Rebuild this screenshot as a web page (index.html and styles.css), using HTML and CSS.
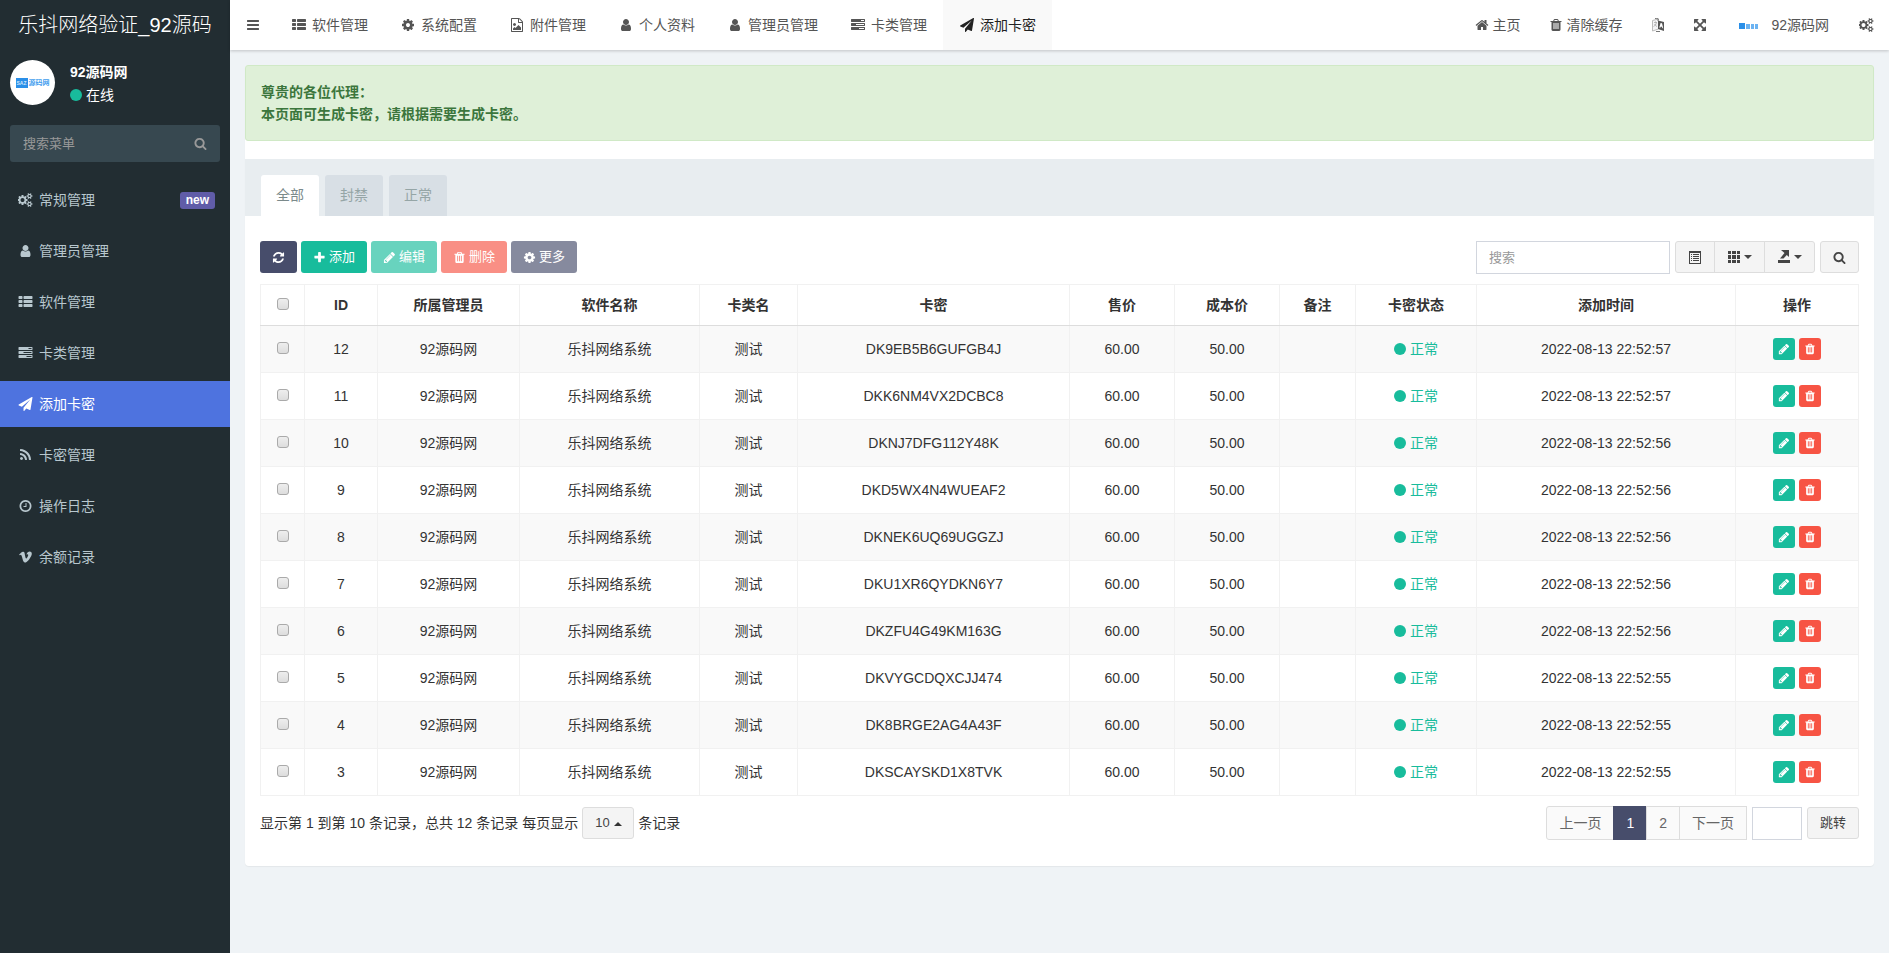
FILE: index.html
```html
<!DOCTYPE html>
<html lang="zh-CN">
<head>
    <meta charset="UTF-8">
    <meta name="viewport" content="width=device-width, initial-scale=1.0">
    <title>添加卡密</title>
    <link rel="stylesheet" href="styles.css">
</head>
<body>

    <!-- icons -->
    <svg class="sprite" aria-hidden="true">
        <symbol id="i-bars" viewBox="0 0 1792 1792"><path d="M1664 1344v128q0 26-19 45t-45 19h-1408q-26 0-45-19t-19-45v-128q0-26 19-45t45-19h1408q26 0 45 19t19 45zm0-512v128q0 26-19 45t-45 19h-1408q-26 0-45-19t-19-45v-128q0-26 19-45t45-19h1408q26 0 45 19t19 45zm0-512v128q0 26-19 45t-45 19h-1408q-26 0-45-19t-19-45v-128q0-26 19-45t45-19h1408q26 0 45 19t19 45z"/></symbol>
        <symbol id="i-list" viewBox="0 0 1792 1792"><path d="M512 1248v192q0 40-28 68t-68 28h-320q-40 0-68-28t-28-68v-192q0-40 28-68t68-28h320q40 0 68 28t28 68zm0-512v192q0 40-28 68t-68 28h-320q-40 0-68-28t-28-68v-192q0-40 28-68t68-28h320q40 0 68 28t28 68zm1280 512v192q0 40-28 68t-68 28h-960q-40 0-68-28t-28-68v-192q0-40 28-68t68-28h960q40 0 68 28t28 68zm-1280-1024v192q0 40-28 68t-68 28h-320q-40 0-68-28t-28-68v-192q0-40 28-68t68-28h320q40 0 68 28t28 68zm1280 512v192q0 40-28 68t-68 28h-960q-40 0-68-28t-28-68v-192q0-40 28-68t68-28h960q40 0 68 28t28 68zm0-512v192q0 40-28 68t-68 28h-960q-40 0-68-28t-28-68v-192q0-40 28-68t68-28h960q40 0 68 28t28 68z"/></symbol>
        <symbol id="i-cog" viewBox="0 0 1792 1792"><path d="M1152 896q0-106-75-181t-181-75-181 75-75 181 75 181 181 75 181-75 75-181zm512-109v222q0 12-8 23t-20 13l-185 28q-19 54-39 91 35 50 107 138 10 12 10 25t-9 23q-27 37-99 108t-94 71q-12 0-26-9l-138-108q-44 23-91 38-16 136-29 186-7 28-36 28h-222q-14 0-24.5-8.5t-11.5-21.5l-28-184q-49-16-90-37l-141 107q-10 9-25 9-14 0-25-11-126-114-165-168-7-10-7-23 0-12 8-23 15-21 51-66.5t54-70.5q-27-50-41-99l-183-27q-13-2-21-12.5t-8-23.5v-222q0-12 8-23t19-13l186-28q14-46 39-92-40-57-107-138-10-12-10-24 0-10 9-23 26-36 98.5-107.5t94.5-71.5q13 0 26 10l138 107q44-23 91-38 16-136 29-186 7-28 36-28h222q14 0 24.5 8.5t11.5 21.5l28 184q49 16 90 37l142-107q9-9 24-9 13 0 25 10 129 119 165 170 7 8 7 22 0 12-8 23-15 21-51 66.5t-54 70.5q26 50 41 98l183 28q13 2 21 12.5t8 23.5z"/></symbol>
        <symbol id="i-cogs" viewBox="0 0 1920 1792"><path d="M832 896q0-106-75-181t-181-75-181 75-75 181 75 181 181 75 181-75 75-181zm768 512q0-52-38-90t-90-38-90 38-38 90q0 53 37.5 90.5t90.5 37.5 90.5-37.5 37.5-90.5zm0-1024q0-52-38-90t-90-38-90 38-38 90q0 53 37.5 90.5t90.5 37.5 90.5-37.5 37.5-90.5zm-384 421v185q0 10-7 19.5t-16 10.5l-155 24q-11 35-32 76 34 48 90 115 7 11 7 20 0 12-7 19-23 30-82.5 89.5t-78.5 59.5q-11 0-21-7l-115-90q-37 19-77 31-11 108-23 155-7 24-30 24h-186q-11 0-20-7.5t-10-17.5l-23-153q-34-10-75-31l-118 89q-7 7-20 7-11 0-21-8-144-133-144-160 0-9 7-19 10-14 41-53t47-61q-23-44-35-82l-152-24q-10-1-17-9.5t-7-19.5v-185q0-10 7-19.5t16-10.5l155-24q11-35 32-76-34-48-90-115-7-11-7-20 0-12 7-20 22-30 82-89t79-59q11 0 21 7l115 90q34-18 77-32 11-108 23-154 7-24 30-24h186q11 0 20 7.5t10 17.5l23 153q34 10 75 31l118-89q8-7 20-7 11 0 21 8 144 133 144 160 0 9-7 19-12 16-42 54t-45 60q23 48 34 82l152 23q10 2 17 10.5t7 19.5zm640 533v140q0 16-149 31-12 27-30 52 51 113 51 138 0 4-4 7-122 71-124 71-8 0-46-47t-52-68q-20 2-30 2t-30-2q-14 21-52 68t-46 47q-2 0-124-71-4-3-4-7 0-25 51-138-18-25-30-52-149-15-149-31v-140q0-16 149-31 13-29 30-52-51-113-51-138 0-4 4-7 4-2 35-20t59-34 30-16q8 0 46 46.5t52 67.5q20-2 30-2t30 2q51-71 92-112l6-2q4 0 124 70 4 3 4 7 0 25-51 138 17 23 30 52 149 15 149 31zm0-1024v140q0 16-149 31-12 27-30 52 51 113 51 138 0 4-4 7-122 71-124 71-8 0-46-47t-52-68q-20 2-30 2t-30-2q-14 21-52 68t-46 47q-2 0-124-71-4-3-4-7 0-25 51-138-18-25-30-52-149-15-149-31v-140q0-16 149-31 13-29 30-52-51-113-51-138 0-4 4-7 4-2 35-20t59-34 30-16q8 0 46 46.5t52 67.5q20-2 30-2t30 2q51-71 92-112l6-2q4 0 124 70 4 3 4 7 0 25-51 138 17 23 30 52 149 15 149 31z"/></symbol>
        <symbol id="i-image" viewBox="0 0 1792 1792"><path d="M1596 380q28 28 48 76t20 88v1152q0 40-28 68t-68 28h-1344q-40 0-68-28t-28-68v-1600q0-40 28-68t68-28h896q40 0 88 20t76 48zm-444-244v376h376q-10-29-22-41l-313-313q-12-12-41-22zm384 1528v-1024h-416q-40 0-68-28t-28-68v-416h-768v1536h1280zm-128-448v320h-1024v-192l192-192 128 128 384-384zm-832-192q-80 0-136-56t-56-136 56-136 136-56 136 56 56 136-56 136-136 56z"/></symbol>
        <symbol id="i-user" viewBox="0 0 1792 1792"><path d="M1536 1399q0 109-62.5 187t-150.5 78h-854q-88 0-150.5-78t-62.5-187q0-85 8.5-160.5t31.5-152 58.5-131 94-89 134.5-34.5q131 128 313 128t313-128q76 0 134.5 34.5t94 89 58.5 131 31.5 152 8.5 160.5zm-256-887q0 159-112.5 271.5t-271.5 112.5-271.5-112.5-112.5-271.5 112.5-271.5 271.5-112.5 271.5 112.5 112.5 271.5z"/></symbol>
        <symbol id="i-tasks" viewBox="0 0 1792 1792"><path d="M1024 1408h640v-128h-640v128zm-384-512h1024v-128h-1024v128zm640-512h384v-128h-384v128zm512 832v256q0 26-19 45t-45 19h-1664q-26 0-45-19t-19-45v-256q0-26 19-45t45-19h1664q26 0 45 19t19 45zm0-512v256q0 26-19 45t-45 19h-1664q-26 0-45-19t-19-45v-256q0-26 19-45t45-19h1664q26 0 45 19t19 45zm0-512v256q0 26-19 45t-45 19h-1664q-26 0-45-19t-19-45v-256q0-26 19-45t45-19h1664q26 0 45 19t19 45z"/></symbol>
        <symbol id="i-plane" viewBox="0 0 1792 1792"><path d="M1764 11q33 24 27 64l-256 1536q-5 29-32 45-14 8-31 8-11 0-24-5l-453-185-242 295q-18 23-49 23-13 0-22-4-19-7-30.5-23.5t-11.5-36.5v-349l864-1059-1069 925-395-162q-37-14-40-55-2-40 32-59l1664-960q15-9 32-9 20 0 36 11z"/></symbol>
        <symbol id="i-rss" viewBox="0 0 1792 1792"><path d="M576 1344q0 80-56 136t-136 56-136-56-56-136 56-136 136-56 136 56 56 136zm512 123q2 28-17 48-18 21-47 21h-135q-25 0-43-16.5t-20-41.5q-22-229-184.5-391.5t-391.5-184.5q-25-2-41.5-20t-16.5-43v-135q0-29 21-47 17-17 43-17h5q160 13 306 80.5t259 181.5q114 113 181.5 259t80.5 306zm512 2q2 27-18 47-18 20-46 20h-143q-26 0-44.5-17.5t-19.5-42.5q-12-215-101-408.5t-231.5-336-336-231.5-408.5-102q-25-1-42.5-19.5t-17.5-43.5v-143q0-28 20-46 18-18 44-18h3q262 13 501.5 120t425.5 294q187 186 294 425.5t120 501.5z"/></symbol>
        <symbol id="i-clock" viewBox="0 0 1792 1792"><path d="M1024 544v448q0 14-9 23t-23 9h-320q-14 0-23-9t-9-23v-64q0-14 9-23t23-9h224v-352q0-14 9-23t23-9h64q14 0 23 9t9 23zm416 352q0-148-73-273t-198-198-273-73-273 73-198 198-73 273 73 273 198 198 273 73 273-73 198-198 73-273zm224 0q0 209-103 385.5t-279.5 279.5-385.5 103-385.5-103-279.5-279.5-103-385.5 103-385.5 279.5-279.5 385.5-103 385.5 103 279.5 279.5 103 385.5z"/></symbol>
        <symbol id="i-vimeo" viewBox="0 0 1792 1792"><path d="M1709 518q-10 236-332 651-333 431-562 431-142 0-240-263-44-160-132-482-72-262-157-262-18 0-127 76l-77-98q24-21 108-96.5t130-115.5q156-138 241-146 95-9 153 55.5t81 203.5q44 287 66 373 55 249 120 249 51 0 154-161 101-161 109-246 13-139-109-139-57 0-121 26 120-393 459-382 251 8 236 326z"/></symbol>
        <symbol id="i-home" viewBox="0 0 1792 1792"><path d="M1472 992v480q0 26-19 45t-45 19h-384v-384h-256v384h-384q-26 0-45-19t-19-45v-480q0-1 .5-3t.5-3l575-474 575 474q1 2 1 6zm223-69l-62 74q-8 9-21 11h-3q-13 0-21-7l-692-577-692 577q-12 8-24 7-13-2-21-11l-62-74q-8-10-7-23.5t11-21.5l719-599q32-26 76-26t76 26l244 204v-195q0-14 9-23t23-9h192q14 0 23 9t9 23v408l219 182q10 8 11 21.5t-7 23.5z"/></symbol>
        <symbol id="i-trash" viewBox="0 0 1792 1792"><path d="M704 1376v-704q0-14-9-23t-23-9h-64q-14 0-23 9t-9 23v704q0 14 9 23t23 9h64q14 0 23-9t9-23zm256 0v-704q0-14-9-23t-23-9h-64q-14 0-23 9t-9 23v704q0 14 9 23t23 9h64q14 0 23-9t9-23zm256 0v-704q0-14-9-23t-23-9h-64q-14 0-23 9t-9 23v704q0 14 9 23t23 9h64q14 0 23-9t9-23zm-544-992h448l-48-117q-7-9-17-11h-317q-10 2-17 11zm928 32v64q0 14-9 23t-23 9h-96v948q0 83-47 143.5t-113 60.5h-832q-66 0-113-58.5t-47-141.5v-952h-96q-14 0-23-9t-9-23v-64q0-14 9-23t23-9h309l70-167q15-37 54-63t79-26h320q40 0 79 26t54 63l70 167h309q14 0 23 9t9 23z"/></symbol>
        <symbol id="i-lang" viewBox="0 0 14 14"><path d="M1.500 2.500l6-1.500v10l-6 2z" fill="#f4f4f6" stroke="#bbb"/><path d="M3 4.500h3M4.500 3.500v1M5.500 4.500q-.5 3-3 4M3.500 6q1 2 2.500 2.500" fill="none" stroke="#aaa" stroke-width=".8"/><path d="M7 2.500l6 1.500v9l-6-2zM9.600 5l-1.300 4.500 1 .3.3-1h1.400l.3 1.300 1 .3L11 5.300z" fill-rule="evenodd"/><path d="M4 .5q2-.5 3.500.5L6.500 2.500M5 13.500h4" fill="none" stroke="#777"/></symbol>
        <symbol id="i-arrows" viewBox="0 0 1792 1792"><path d="M1411 541l-355 355 355 355 144-144q29-31 70-14 39 17 39 59v448q0 26-19 45t-45 19h-448q-42 0-59-40-17-39 14-69l144-144-355-355-355 355 144 144q31 30 14 69-17 40-59 40h-448q-26 0-45-19t-19-45v-448q0-42 40-59 39-17 69 14l144 144 355-355-355-355-144 144q-19 19-45 19-12 0-24-5-40-17-40-59v-448q0-26 19-45t45-19h448q42 0 59 40 17 39-14 69l-144 144 355 355 355-355-144-144q-31-30-14-69 17-40 59-40h448q26 0 45 19t19 45v448q0 42-39 59-13 5-25 5-26 0-45-19z"/></symbol>
        <symbol id="i-search" viewBox="0 0 1792 1792"><path d="M1216 832q0-185-131.500-316.500t-316.500-131.500-316.500 131.500-131.500 316.500 131.500 316.500 316.500 131.500 316.500-131.500 131.500-316.500zm512 832q0 52-38 90t-90 38q-54 0-90-38l-343-342q-179 124-399 124-143 0-273.500-55.500t-225-150-150-225-55.500-273.500 55.500-273.500 150-225 225-150 273.500-55.500 273.500 55.500 225 150 150 225 55.500 273.500q0 220-124 399l343 343q37 37 37 90z"/></symbol>
        <symbol id="i-refresh" viewBox="0 0 1792 1792"><path d="M1639 1056q0 5-1 7-64 268-268 434.500t-478 166.500q-146 0-282.500-55t-243.500-157l-129 129q-19 19-45 19t-45-19-19-45v-448q0-26 19-45t45-19h448q26 0 45 19t19 45-19 45l-137 137q71 66 161 102t187 36q134 0 250-65t186-179q11-17 53-117 8-23 30-23h192q13 0 22.500 9.500t9.500 22.500zm25-800v448q0 26-19 45t-45 19h-448q-26 0-45-19t-19-45 19-45l138-138q-148-137-349-137-134 0-250 65t-186 179q-11 17-53 117-8 23-30 23h-199q-13 0-22.500-9.500t-9.500-22.500v-7q65-268 270-434.500t480-166.500q146 0 284 55.500t245 156.500l130-129q19-19 45-19t45 19 19 45z"/></symbol>
        <symbol id="i-plus" viewBox="0 0 1792 1792"><path d="M1600 736v192q0 40-28 68t-68 28h-416v416q0 40-28 68t-68 28h-192q-40 0-68-28t-28-68v-416h-416q-40 0-68-28t-28-68v-192q0-40 28-68t68-28h416v-416q0-40 28-68t68-28h192q40 0 68 28t28 68v416h416q40 0 68 28t28 68z"/></symbol>
        <symbol id="i-pencil" viewBox="0 0 1792 1792"><path d="M491 1536l91-91-235-235-91 91v107h128v128h107zm523-928q0-22-22-22-10 0-17 7l-542 542q-7 7-7 17 0 22 22 22 10 0 17-7l542-542q7-7 7-17zm-54-192l416 416-832 832h-416v-416zm683 96q0 53-37 90l-166 166-416-416 166-165q36-38 90-38 53 0 91 38l235 234q37 39 37 91z"/></symbol>
        <symbol id="i-listalt" viewBox="0 0 14 14"><path d="M1 1h12v13H1zM2 3v10h10V3zM3 4h1v1H3zM5 4h6v1H5zM3 6h1v1H3zM5 6h6v1H5zM3 8h1v1H3zM5 8h6v1H5zM3 10h1v1H3zM5 10h6v1H5z" fill-rule="evenodd"/></symbol>
        <symbol id="i-th" viewBox="0 0 14 14"><path d="M1 1h3v3H1zM5 1h4v3H5zM10 1h3v3h-3zM1 5h3v4H1zM5 5h4v4H5zM10 5h3v4h-3zM1 10h3v3H1zM5 10h4v3H5zM10 10h3v3h-3z"/></symbol>
        <symbol id="i-export" viewBox="0 0 14 14"><path d="M1 10h12v3H1zM4 0h8v7L9.800 5 6.500 8.500H3L7.500 3z"/></symbol>
    </svg>

    <div class="layout">
        <aside class="sidebar">
            <a class="logo" href="#">乐抖网络验证_92源码</a>
            <div class="user-panel">
                <div class="avatar"><span class="brand"><b>SAZ</b>源码网</span></div>
                <div class="user-info">
                    <strong>92源码网</strong>
                    <span><i class="dot"></i>在线</span>
                </div>
            </div>
            <form class="menu-search">
                <input type="text" placeholder="搜索菜单" aria-label="搜索菜单">
                <button type="button" aria-label="搜索"><svg class="icon"><use href="#i-search"/></svg></button>
            </form>
            <nav class="menu">
                <a href="#"><svg class="icon wide"><use href="#i-cogs"/></svg>常规管理<span class="badge">new</span></a>
                <a href="#"><svg class="icon"><use href="#i-user"/></svg>管理员管理</a>
                <a href="#"><svg class="icon"><use href="#i-list"/></svg>软件管理</a>
                <a href="#"><svg class="icon"><use href="#i-tasks"/></svg>卡类管理</a>
                <a href="#" class="active"><svg class="icon"><use href="#i-plane"/></svg>添加卡密</a>
                <a href="#"><svg class="icon"><use href="#i-rss"/></svg>卡密管理</a>
                <a href="#"><svg class="icon"><use href="#i-clock"/></svg>操作日志</a>
                <a href="#"><svg class="icon"><use href="#i-vimeo"/></svg>余额记录</a>
            </nav>
        </aside>

        <div class="main">
            <header class="navbar">
                <a class="toggle" href="#" aria-label="菜单"><svg class="icon"><use href="#i-bars"/></svg></a>
                <nav class="nav-tabs">
                    <a href="#"><svg class="icon"><use href="#i-list"/></svg>软件管理</a>
                    <a href="#"><svg class="icon"><use href="#i-cog"/></svg>系统配置</a>
                    <a href="#"><svg class="icon"><use href="#i-image"/></svg>附件管理</a>
                    <a href="#"><svg class="icon"><use href="#i-user"/></svg>个人资料</a>
                    <a href="#"><svg class="icon"><use href="#i-user"/></svg>管理员管理</a>
                    <a href="#"><svg class="icon"><use href="#i-tasks"/></svg>卡类管理</a>
                    <a href="#" class="active"><svg class="icon"><use href="#i-plane"/></svg>添加卡密</a>
                </nav>
                <nav class="nav-right">
                    <a href="#"><svg class="icon"><use href="#i-home"/></svg>主页</a>
                    <a href="#"><svg class="icon"><use href="#i-trash"/></svg>清除缓存</a>
                    <a href="#" aria-label="语言"><svg class="icon"><use href="#i-lang"/></svg></a>
                    <a href="#" aria-label="全屏"><svg class="icon"><use href="#i-arrows"/></svg></a>
                    <a href="#" class="account"><svg class="mini-logo" viewBox="0 0 25 25"><path d="M3 10h6v6H3z" fill="#2a8fe8"/><path d="M10 11h4v5h-4zM15 11h3v5h-3zM19 11h3v5h-3z" fill="#6bb3f2"/></svg>92源码网</a>
                    <a href="#" aria-label="设置"><svg class="icon wide"><use href="#i-cogs"/></svg></a>
                </nav>
            </header>

            <div class="content">
                <div class="panel">
                    <div class="alert">尊贵的各位代理：<br>本页面可生成卡密，请根据需要生成卡密。</div>
                    <div class="panel-heading">
                        <a href="#" class="active">全部</a>
                        <a href="#">封禁</a>
                        <a href="#">正常</a>
                    </div>
                    <div class="panel-body">
                        <div class="toolbar">
                            <button class="btn primary" aria-label="刷新"><svg class="icon"><use href="#i-refresh"/></svg></button>
                            <button class="btn success"><svg class="icon"><use href="#i-plus"/></svg>添加</button>
                            <button class="btn success faded"><svg class="icon"><use href="#i-pencil"/></svg>编辑</button>
                            <button class="btn danger faded"><svg class="icon"><use href="#i-trash"/></svg>删除</button>
                            <button class="btn primary faded"><svg class="icon"><use href="#i-cog"/></svg>更多</button>
                            <input class="form-control search" type="text" placeholder="搜索" aria-label="搜索">
                            <div class="btn-group">
                                <button class="btn default" aria-label="切换"><svg class="icon"><use href="#i-listalt"/></svg></button>
                                <button class="btn default" aria-label="列"><svg class="icon"><use href="#i-th"/></svg><i class="caret"></i></button>
                                <button class="btn default" aria-label="导出"><svg class="icon"><use href="#i-export"/></svg><i class="caret"></i></button>
                            </div>
                            <button class="btn default" aria-label="普通搜索"><svg class="icon"><use href="#i-search"/></svg></button>
                        </div>

                        <table class="card-table">
                            <colgroup>
                                <col class="c-check"><col class="c-id"><col class="c-admin"><col class="c-soft">
                                <col class="c-type"><col class="c-key"><col class="c-price"><col class="c-price">
                                <col class="c-note"><col class="c-status"><col class="c-time"><col class="c-op">
                            </colgroup>
                            <thead>
                                <tr>
                                    <th><input type="checkbox" aria-label="全选"></th>
                                    <th>ID</th>
                                    <th>所属管理员</th>
                                    <th>软件名称</th>
                                    <th>卡类名</th>
                                    <th>卡密</th>
                                    <th>售价</th>
                                    <th>成本价</th>
                                    <th>备注</th>
                                    <th>卡密状态</th>
                                    <th>添加时间</th>
                                    <th>操作</th>
                                </tr>
                            </thead>
                            <tbody id="rows"></tbody>
                        </table>

                        <div class="table-footer">
                            <div class="page-info">
                                <label for="size">显示第 1 到第 10 条记录，总共 12 条记录 每页显示</label>
                                <span class="page-size">
                                    <select id="size"><option>10</option><option>25</option><option>50</option></select>
                                    <i class="caret up"></i>
                                </span>
                                <span>条记录</span>
                            </div>
                            <div class="pager">
                                <nav class="pagination">
                                    <a href="#">上一页</a>
                                    <a href="#" class="active">1</a>
                                    <a href="#">2</a>
                                    <a href="#">下一页</a>
                                </nav>
                                <input class="form-control jump" type="text" aria-label="页码">
                                <button class="btn default">跳转</button>
                            </div>
                        </div>
                    </div>
                </div>
            </div>
        </div>
    </div>

    <script>
        const cards = [
            [12, "DK9EB5B6GUFGB4J", "57"],
            [11, "DKK6NM4VX2DCBC8", "57"],
            [10, "DKNJ7DFG112Y48K", "56"],
            [9, "DKD5WX4N4WUEAF2", "56"],
            [8, "DKNEK6UQ69UGGZJ", "56"],
            [7, "DKU1XR6QYDKN6Y7", "56"],
            [6, "DKZFU4G49KM163G", "56"],
            [5, "DKVYGCDQXCJJ474", "55"],
            [4, "DK8BRGE2AG4A43F", "55"],
            [3, "DKSCAYSKD1X8TVK", "55"]
        ];

        document.getElementById("rows").innerHTML = cards.map(([id, key, sec]) => `
            <tr>
                <td><input type="checkbox" aria-label="选择 ${id}"></td>
                <td>${id}</td>
                <td>92源码网</td>
                <td>乐抖网络系统</td>
                <td>测试</td>
                <td>${key}</td>
                <td>60.00</td>
                <td>50.00</td>
                <td></td>
                <td><span class="status"><i class="dot"></i>正常</span></td>
                <td>2022-08-13 22:52:${sec}</td>
                <td><div class="ops">
                    <button class="btn-xs success" aria-label="编辑"><svg class="icon"><use href="#i-pencil"/></svg></button>
                    <button class="btn-xs danger" aria-label="删除"><svg class="icon"><use href="#i-trash"/></svg></button>
                </div></td>
            </tr>`).join("");
    </script>

</body>
</html>
```

FILE: styles.css
```css
* { box-sizing: border-box; }
body { margin: 0; font: 14px/20px "Liberation Sans", "Noto Sans CJK SC", sans-serif; color: #333; background: #eff3f6; }
a { color: inherit; text-decoration: none; }
input, button, select { font: inherit; color: inherit; }
button { cursor: pointer; }

.sprite { position: absolute; width: 0; height: 0; }
.icon { width: 14px; height: 14px; fill: currentColor; flex: none; }
.icon.wide { width: 15px; }
.dot { display: inline-block; width: 12px; height: 12px; border-radius: 50%; background: #18bc9c; }
.caret { border-top: 4px solid; border-left: 4px solid transparent; border-right: 4px solid transparent; }
.caret.up { border-top: 0; border-bottom: 4px solid; }

.layout { display: flex; min-height: 100vh; }

/* sidebar */
.sidebar { width: 230px; flex: none; background: #222d32; color: #b8c7ce; }
.logo { display: block; height: 50px; line-height: 50px; font-size: 20px; font-weight: 300; text-align: center; color: #fff; white-space: nowrap; }
.user-panel { display: flex; gap: 15px; padding: 10px; color: #fff; }
.avatar { width: 45px; height: 45px; border-radius: 50%; background: #fff; display: flex; align-items: center; justify-content: center; }
.brand { display: flex; align-items: center; gap: 1px; font-size: 7px; line-height: 10px; font-weight: bold; color: #3f9dee; white-space: nowrap; }
.brand b { padding: 0 1px; font-size: 5px; background: #2a8fe8; color: #cfe6fb; }
.user-info { display: flex; flex-direction: column; gap: 3px; padding-top: 2px; }
.user-info span { display: flex; align-items: center; gap: 4px; }
.menu-search { display: flex; align-items: center; height: 37px; margin: 10px; border-radius: 3px; background: #374850; color: #999; }
.menu-search input { flex: 1; min-width: 0; padding: 0 13px; border: 0; outline: 0; background: none; font-size: 13px; }
.menu-search button { display: flex; padding: 0 13px; border: 0; background: none; }
.menu-search .icon, .toolbar .icon { width: 13px; height: 13px; }
::placeholder { color: #999; opacity: 1; }
.menu { display: flex; flex-direction: column; gap: 5px; padding-top: 5px; }
.menu a { display: flex; align-items: center; gap: 6px; height: 46px; padding: 0 15px 0 18px; }
.menu .icon { width: 15px; }
.menu .active { background: #4e73df; color: #fff; }
.badge { margin-left: auto; padding: 0 6px; border-radius: 3px; background: #605ca8; color: #fff; font-size: 12px; line-height: 17px; font-weight: bold; }

/* top bar */
.main { flex: 1; min-width: 0; }
.navbar { display: flex; height: 50px; background: #fff; color: #555; box-shadow: 0 1px 3px rgba(0, 0, 0, .2); white-space: nowrap; }
.navbar a { display: flex; align-items: center; padding: 0 15px; }
.navbar .toggle { width: 45px; justify-content: center; }
.nav-tabs { display: flex; flex: 1; }
.navbar .nav-tabs a { padding: 0 16px 0 17px; gap: 6px; }
.navbar .nav-tabs .active { background: #f9f9f9; color: #222; }
.nav-right { display: flex; }
.nav-right a { gap: 4px; }
.nav-right .icon { margin: 0 -1px; }
.nav-right .icon.wide { margin: 0; }
.navbar .account { gap: 10px; }
.mini-logo { width: 25px; height: 25px; }

/* panel */
.content { padding: 15px; }
.panel { background: #fff; border-radius: 4px; box-shadow: 0 1px 1px rgba(0, 0, 0, .05); }
.alert { padding: 15px; margin-bottom: 18px; border: 1px solid #d0e9c6; border-radius: 3px; background: #dff0d8; color: #3c763d; font-weight: bold; line-height: 22px; }
.panel-heading { display: flex; gap: 6px; padding: 16px 16px 0; background: #e8edf0; color: #95a5a6; }
.panel-heading a { padding: 0 15px; line-height: 41px; border-radius: 3px 3px 0 0; background: #d8dfe5; }
.panel-heading .active { background: #fff; color: #7b8a8b; }
.panel-body { padding: 25px 15px 26px; }

.toolbar { display: flex; align-items: flex-start; gap: 4px; }
.btn { display: inline-flex; align-items: center; justify-content: center; gap: 3px; height: 32px; padding: 0 12px; border: 0; border-radius: 3px; font-size: 13px; color: #fff; }
.primary { background: #474d6b; }
.success { background: #18bc9c; }
.danger { background: #f75444; }
.faded { opacity: .65; }
.btn.default { border: 1px solid #ddd; background: #f4f4f4; color: #444; }
.form-control { height: 33px; padding: 0 12px; border: 1px solid #d2d6de; background: #fff; font-size: 13px; }
.search { width: 194px; margin-left: auto; }
.btn-group { display: flex; margin: 0 1px; }
.btn-group .btn { border-radius: 0; }
.btn-group .btn + .btn { margin-left: -1px; }
.btn-group .btn:first-child { border-radius: 3px 0 0 3px; }
.btn-group .btn:last-child { border-radius: 0 3px 3px 0; }
.btn-group .icon { width: 14px; height: 14px; }

/* table */
.card-table { width: 100%; margin-top: 10px; border-collapse: collapse; table-layout: fixed; text-align: center; }
.card-table th, .card-table td { height: 47px; padding: 0 8px; border: 1px solid #f1f1f1; }
.card-table th { height: 41px; border-bottom-color: #ddd; }
.card-table tbody tr:nth-child(odd) { background: #f9f9f9; }
.card-table input { display: block; appearance: none; width: 12px; height: 12px; margin: 0 auto 3px; border: 1px solid #aaa; border-radius: 3px; background: linear-gradient(#eee, #ddd); }
.c-check { width: 44px; }
.c-id { width: 73px; }
.c-admin { width: 142px; }
.c-soft { width: 180px; }
.c-type { width: 98px; }
.c-key { width: 272px; }
.c-price { width: 105px; }
.c-note { width: 76px; }
.c-status { width: 121px; }
.c-time { width: 259px; }
.c-op { width: 123px; }
.status { display: inline-flex; align-items: center; gap: 4px; color: #18bc9c; }
.ops { display: flex; justify-content: center; gap: 4px; }
.btn-xs { display: flex; align-items: center; justify-content: center; width: 22px; height: 22px; padding: 0; border: 0; border-radius: 3px; color: #fff; }
.btn-xs .icon { width: 12px; height: 12px; }

/* footer */
.table-footer { display: flex; justify-content: space-between; padding-top: 10px; }
.page-info { display: flex; align-items: center; gap: 4px; }
.page-size { position: relative; }
.page-size select { display: block; appearance: none; width: 52px; height: 32px; padding: 0 12px; border: 1px solid #ddd; border-radius: 3px; background: #f4f4f4; color: #444; font-size: 13px; }
.page-size .caret { position: absolute; right: 12px; top: 15px; pointer-events: none; }
.pager { display: flex; align-items: center; gap: 5px; }
.pagination { display: flex; color: #666; }
.pagination a { padding: 6px 12px; border: 1px solid #ddd; background: #fafafa; }
.pagination a + a { margin-left: -1px; }
.pagination a:first-child { border-radius: 3px 0 0 3px; }
.pagination .active { border-color: #474d6b; background: #474d6b; color: #fff; }
.jump { width: 50px; }
```
